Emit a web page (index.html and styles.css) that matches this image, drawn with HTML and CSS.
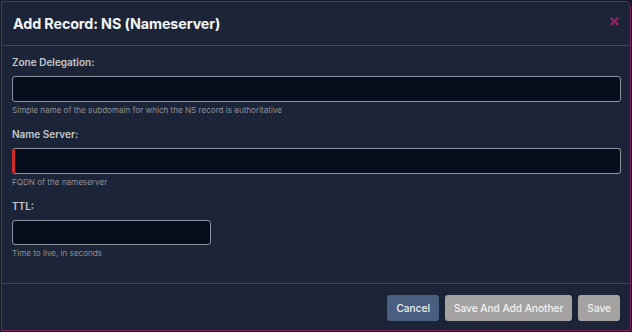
FILE: index.html
```html
<!DOCTYPE html>
<html lang="en">
<head>
    <meta charset="UTF-8">
    <title>Add Record: NS (Nameserver)</title>
    <link rel="stylesheet" href="styles.css">
</head>
<body>
    <div class="modal">
        <div class="modal-header">
            <h2>Add Record: NS (Nameserver)</h2>
            <span class="close">&times;</span>
        </div>

        <div class="modal-body">
            <div class="field">
                <label for="zone">Zone Delegation:</label>
                <input type="text" id="zone">
                <div class="help">Simple name of the subdomain for which the NS record is authoritative</div>
            </div>
            <div class="field">
                <label for="ns">Name Server:</label>
                <input type="text" id="ns" class="invalid">
                <div class="help">FQDN of the nameserver</div>
            </div>
            <div class="field">
                <label for="ttl">TTL:</label>
                <input type="text" id="ttl" class="short">
                <div class="help">Time to live, in seconds</div>
            </div>
        </div>

        <div class="modal-footer">
            <button class="btn btn-cancel">Cancel</button>
            <button class="btn btn-grey">Save And Add Another</button>
            <button class="btn btn-grey">Save</button>
        </div>
    </div>
</body>
</html>
```

FILE: styles.css
```css
body {
    margin: 0;
    padding: 1px;
    background: #171b26;
    font-family: Inter, "Noto Sans", sans-serif;
}
.modal {
    box-sizing: border-box;
    width: 630px;
    height: 330px;
    background: #1c2538;
    border: 1px solid #7c1f5b;
    border-radius: 0 6px 0 0;
    display: flex;
    flex-direction: column;
}
.modal-header {
    height: 43px;
    border-bottom: 1px solid #394848;
    display: flex;
    align-items: center;
    justify-content: space-between;
    padding: 0 10px 0 11px;
}
.modal-header h2 {
    margin: 0;
    font-size: 14.3px;
    font-weight: 700;
    color: #f4f5f7;
    letter-spacing: -0.1px;
}
.close {
    color: #8c2566;
    font-size: 17px;
    font-weight: 700;
    line-height: 1;
    margin-top: -5px;
}
.modal-body {
    flex: 1;
    padding: 9px 10px 0 10px;
}
.field {
    margin-bottom: 11px;
}
label {
    display: block;
    font-size: 10px;
    line-height: 15px;
    font-weight: 600;
    color: #c6c8cc;
    margin-bottom: 6px;
}
input[type="text"] {
    display: block;
    box-sizing: border-box;
    width: 609px;
    height: 26px;
    background: #060e1e;
    border: 1px solid #8e929b;
    border-radius: 3px;
    outline: none;
}
input.invalid {
    border-left: 3px solid #d02a2a;
}
input.short {
    width: 199px;
    height: 25px;
}
.help {
    margin-top: 2px;
    font-size: 8.1px;
    line-height: 12px;
    color: #8d919a;
}
.modal-footer {
    border-top: 1px solid #394848;
    height: 47px;
    box-sizing: border-box;
    display: flex;
    justify-content: flex-end;
    align-items: flex-start;
    gap: 6px;
    padding: 11px 10px 0 0;
}
.btn {
    height: 26px;
    padding: 0 9px;
    border: none;
    border-radius: 3px;
    font-family: Inter, "Noto Sans", sans-serif;
    font-size: 10.1px;
    font-weight: 500;
    color: #f2f2f4;
}
.btn-cancel {
    background: #4a5e80;
}
.btn-grey {
    background: #a5a2a2;
}
```
